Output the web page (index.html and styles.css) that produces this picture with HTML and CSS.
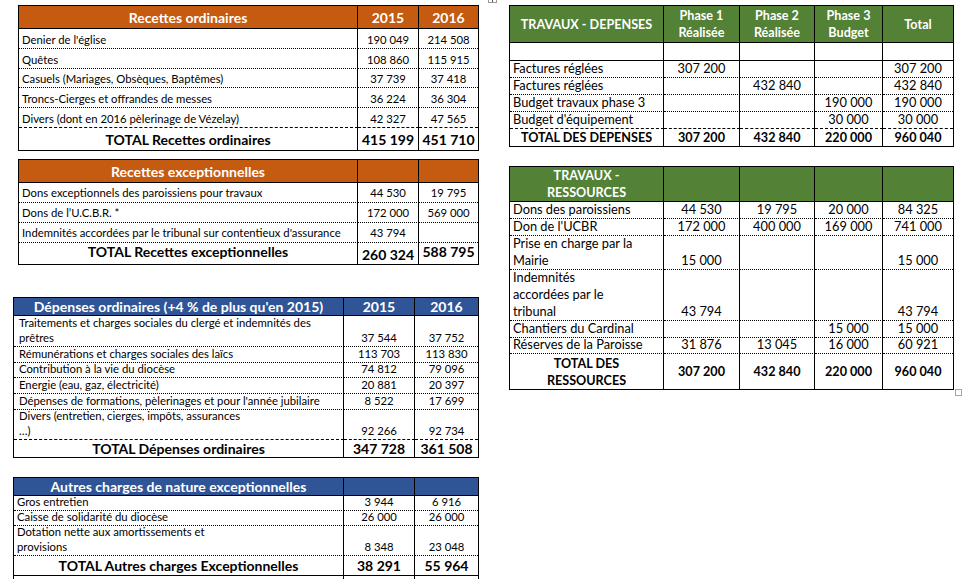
FILE: index.html
```html
<!DOCTYPE html>
<html lang="fr">
<head>
<meta charset="utf-8">
<title>Budget de la paroisse</title>
<link rel="stylesheet" href="styles.css">
</head>
<body>
<main class="page">
  <section class="left">
    <div class="tbl t1 orange">
      <div class="row hd"><div class="c">Recettes ordinaires</div><div class="c">2015</div><div class="c">2016</div></div>
      <div class="row"><div class="c l">Denier de l'église</div><div class="c">190 049</div><div class="c">214 508</div></div>
      <div class="row"><div class="c l">Quêtes</div><div class="c">108 860</div><div class="c">115 915</div></div>
      <div class="row"><div class="c l">Casuels (Mariages, Obsèques, Baptêmes)</div><div class="c">37 739</div><div class="c">37 418</div></div>
      <div class="row"><div class="c l">Troncs-Cierges et offrandes de messes</div><div class="c">36 224</div><div class="c">36 304</div></div>
      <div class="row dash"><div class="c l">Divers (dont en 2016 pèlerinage de Vézelay)</div><div class="c">42 327</div><div class="c">47 565</div></div>
      <div class="row tot last"><div class="c">TOTAL Recettes ordinaires</div><div class="c">415 199</div><div class="c">451 710</div></div>
    </div>

    <div class="tbl t2 orange">
      <div class="row hd"><div class="c">Recettes exceptionnelles</div><div class="c"></div><div class="c"></div></div>
      <div class="row"><div class="c l">Dons exceptionnels des paroissiens pour travaux</div><div class="c">44 530</div><div class="c">19 795</div></div>
      <div class="row"><div class="c l">Dons de l’U.C.B.R. *</div><div class="c">172 000</div><div class="c">569 000</div></div>
      <div class="row"><div class="c l">Indemnités accordées par le tribunal sur contentieux d'assurance</div><div class="c">43 794</div><div class="c"></div></div>
      <div class="row tot last"><div class="c">TOTAL Recettes exceptionnelles</div><div class="c low">260 324</div><div class="c">588 795</div></div>
    </div>

    <div class="tbl t3 blue">
      <div class="row hd"><div class="c">Dépenses ordinaires (+4 % de plus qu'en 2015)</div><div class="c">2015</div><div class="c">2016</div></div>
      <div class="row"><div class="c l">Traitements et charges sociales du clergé et indemnités des<br>prêtres</div><div class="c">37 544</div><div class="c">37 752</div></div>
      <div class="row"><div class="c l">Rémunérations et charges sociales des laïcs</div><div class="c">113 703</div><div class="c">113 830</div></div>
      <div class="row"><div class="c l">Contribution à la vie du diocèse</div><div class="c">74 812</div><div class="c">79 096</div></div>
      <div class="row"><div class="c l">Energie (eau, gaz, électricité)</div><div class="c">20 881</div><div class="c">20 397</div></div>
      <div class="row"><div class="c l">Dépenses de formations, pèlerinages et pour l'année jubilaire</div><div class="c">8 522</div><div class="c">17 699</div></div>
      <div class="row dash"><div class="c l">Divers (entretien, cierges, impôts, assurances<br>…)</div><div class="c">92 266</div><div class="c">92 734</div></div>
      <div class="row tot last"><div class="c">TOTAL Dépenses ordinaires</div><div class="c">347 728</div><div class="c">361 508</div></div>
    </div>

    <div class="tbl t4 blue">
      <div class="row hd"><div class="c">Autres charges de nature exceptionnelles</div><div class="c"></div><div class="c"></div></div>
      <div class="row"><div class="c l">Gros entretien</div><div class="c">3 944</div><div class="c">6 916</div></div>
      <div class="row"><div class="c l">Caisse de solidarité du diocèse</div><div class="c">26 000</div><div class="c">26 000</div></div>
      <div class="row"><div class="c l">Dotation nette aux amortissements et<br>provisions</div><div class="c">8 348</div><div class="c">23 048</div></div>
      <div class="row tot solid"><div class="c">TOTAL Autres charges Exceptionnelles</div><div class="c">38 291</div><div class="c">55 964</div></div>
      <div class="row last"><div class="c"></div><div class="c"></div><div class="c"></div></div>
    </div>
  </section>

  <section class="right">
    <span class="move-handle" aria-hidden="true"></span>
    <div class="tbl ta green">
      <div class="row hd"><div class="c">TRAVAUX - DEPENSES</div><div class="c">Phase 1<br>Réalisée</div><div class="c">Phase 2<br>Réalisée</div><div class="c">Phase 3<br>Budget</div><div class="c">Total</div></div>
      <div class="row solid"><div class="c"></div><div class="c"></div><div class="c"></div><div class="c"></div><div class="c"></div></div>
      <div class="row"><div class="c l">Factures réglées</div><div class="c">307 200</div><div class="c"></div><div class="c"></div><div class="c">307 200</div></div>
      <div class="row"><div class="c l">Factures réglées</div><div class="c"></div><div class="c">432 840</div><div class="c"></div><div class="c">432 840</div></div>
      <div class="row"><div class="c l">Budget travaux phase 3</div><div class="c"></div><div class="c"></div><div class="c">190 000</div><div class="c">190 000</div></div>
      <div class="row dash"><div class="c l">Budget d'équipement</div><div class="c"></div><div class="c"></div><div class="c">30 000</div><div class="c">30 000</div></div>
      <div class="row tot last"><div class="c">TOTAL DES DEPENSES</div><div class="c">307 200</div><div class="c">432 840</div><div class="c">220 000</div><div class="c">960 040</div></div>
    </div>

    <div class="tbl tb green">
      <div class="row hd"><div class="c">TRAVAUX -<br>RESSOURCES</div><div class="c"></div><div class="c"></div><div class="c"></div><div class="c"></div></div>
      <div class="row"><div class="c l">Dons des paroissiens</div><div class="c">44 530</div><div class="c">19 795</div><div class="c">20 000</div><div class="c">84 325</div></div>
      <div class="row"><div class="c l">Don de l'UCBR</div><div class="c">172 000</div><div class="c">400 000</div><div class="c">169 000</div><div class="c">741 000</div></div>
      <div class="row"><div class="c l">Prise en charge par la<br>Mairie</div><div class="c">15 000</div><div class="c"></div><div class="c"></div><div class="c">15 000</div></div>
      <div class="row"><div class="c l">Indemnités<br>accordées par le<br>tribunal</div><div class="c">43 794</div><div class="c"></div><div class="c"></div><div class="c">43 794</div></div>
      <div class="row"><div class="c l">Chantiers du Cardinal</div><div class="c"></div><div class="c"></div><div class="c">15 000</div><div class="c">15 000</div></div>
      <div class="row"><div class="c l">Réserves de la Paroisse</div><div class="c">31 876</div><div class="c">13 045</div><div class="c">16 000</div><div class="c">60 921</div></div>
      <div class="row tot last"><div class="c">TOTAL DES<br>RESSOURCES</div><div class="c">307 200</div><div class="c">432 840</div><div class="c">220 000</div><div class="c">960 040</div></div>
      <span class="resize-handle" aria-hidden="true"></span>
    </div>
  </section>
</main>
</body>
</html>
```
FILE: styles.css
```css
* { box-sizing: border-box; }

html, body {
  margin: 0;
  padding: 0;
  background: #ffffff;
}

body {
  width: 973px;
  height: 579px;
  overflow: hidden;
  font-family: Lato, "Noto Sans", sans-serif;
  font-size: 11.3px;
  color: #000000;
}

.page {
  display: flex;
  align-items: flex-start;
  padding-top: 5px;
}

.left {
  width: 479px;
  display: flex;
  flex-direction: column;
}

.right {
  position: relative;
  margin-left: 30px;
  display: flex;
  flex-direction: column;
}

/* ---------- generic table grid ---------- */
.tbl {
  display: grid;
  border: 1px solid #000;
  position: relative;
}

.row { display: contents; }

.c {
  display: flex;
  align-items: flex-end;
  justify-content: center;
  text-align: center;
  padding: 0 3px 1px;
  line-height: 15px;
  white-space: nowrap;
  border-right: 1px solid #000;
  border-bottom: 1px dotted #000;
}

.c:last-child { border-right: none; }

.c.l {
  justify-content: flex-start;
  text-align: left;
}

.row.hd > .c {
  border-bottom: 1px solid #000;
  color: #ffffff;
  font-weight: 700;
  font-size: 14px;
  align-items: center;
  padding-bottom: 0;
}

.row.dash > .c { border-bottom-style: dashed; }
.row.solid > .c { border-bottom-style: solid; }
.row.last > .c { border-bottom: none; }

.row.tot > .c {
  font-weight: 700;
  font-size: 14px;
  align-items: center;
  padding-bottom: 0;
}

.orange .row.hd > .c { background: #c55a11; }
.blue .row.hd > .c { background: #2f5597; }
.green .row.hd > .c { background: #538135; }

/* ---------- left tables ---------- */
.t1, .t2 {
  margin-left: 18px;
  width: 461px;
  grid-template-columns: 339px 61px 59px;
}

.t1 { grid-template-rows: 23px 20px 20px 19px 20px 20px 22px; }

.t2 {
  margin-top: 8px;
  grid-template-rows: 23px 20px 20px 20px 21px;
}

.t2 .row:not(.hd):not(.tot) > .c { padding-bottom: 2px; }
.t2 .row.tot > .c { padding-bottom: 4px; }
.t2 .row.tot > .c.low { padding-bottom: 0; padding-top: 2px; }

.t3, .t4 {
  margin-left: 13px;
  width: 466px;
  grid-template-columns: 330px 71px 63px;
}

.t3 .c.l { padding-left: 5px; }
.t4 .c.l { padding-left: 3px; }

.t3 {
  margin-top: 32px;
  grid-template-rows: 18px 31px 16px 15px 16px 16px 30px 17px;
}

.t4 {
  margin-top: 19px;
  grid-template-rows: 18px 15px 15px 30px 20px 20px;
}

/* ---------- right tables ---------- */
.ta, .tb {
  width: 445px;
  grid-template-columns: 154px 76px 75px 68px 70px;
  font-size: 12.8px;
}

.ta .c, .tb .c { line-height: 17px; padding-bottom: 0; }
.ta .row.hd > .c, .tb .row.hd > .c,
.ta .row.tot > .c, .tb .row.tot > .c { line-height: 17px; font-size: 12.6px; }

.ta { grid-template-rows: 37px 18px 17px 17px 17px 17px 17px; }

.tb {
  margin-top: 19px;
  grid-template-rows: 35px 17px 17px 34px 51px 17px 16px 35px;
}

/* ---------- Word table handles ---------- */
.move-handle {
  position: absolute;
  left: -21px;
  top: -11px;
  width: 9px;
  height: 9px;
  border: 1px solid #9a9a9a;
  background: #ffffff;
}

.move-handle::after {
  content: "";
  position: absolute;
  left: 3px;
  top: 3px;
  width: 1px;
  height: 4px;
  background: #555;
}

.resize-handle {
  position: absolute;
  left: 445px;
  top: 222px;
  width: 7px;
  height: 7px;
  border: 1px solid #a6a6a6;
  background: #ffffff;
}
```
